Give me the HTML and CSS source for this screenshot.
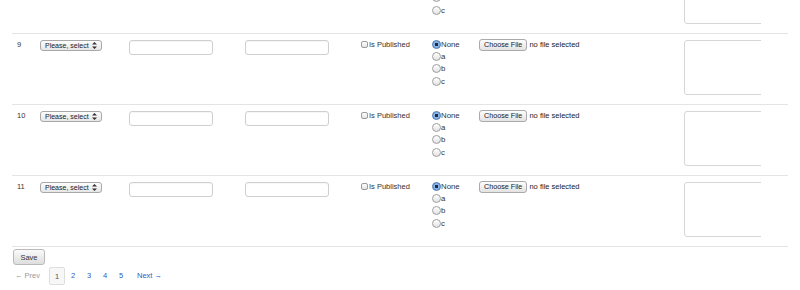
FILE: index.html
```html
<!DOCTYPE html>
<html lang="en">
<head>
    <meta charset="UTF-8">
    <title>Items</title>
    <link rel="stylesheet" href="styles.css">
</head>
<body>
    <form class="grid-form">
        <table class="items">
            <colgroup>
                <col class="c-num"><col class="c-sel"><col class="c-in"><col class="c-in"><col class="c-chk"><col class="c-radio"><col class="c-file"><col class="c-area">
            </colgroup>
            <tbody>
                <tr>
                    <td>8</td>
                    <td><select><option>Please, select</option></select></td>
                    <td><input type="text"></td>
                    <td><input type="text"></td>
                    <td><label class="chk"><input type="checkbox">Is Published</label></td>
                    <td>
                        <label class="opt"><input type="radio" name="r8" checked>None</label>
                        <label class="opt"><input type="radio" name="r8">a</label>
                        <label class="opt"><input type="radio" name="r8">b</label>
                        <label class="opt"><input type="radio" name="r8">c</label>
                    </td>
                    <td><span class="file-btn">Choose File</span> <span class="file-name">no file selected</span></td>
                    <td><div class="area-clip"><textarea></textarea></div></td>
                </tr>
                <tr>
                    <td>9</td>
                    <td><select><option>Please, select</option></select></td>
                    <td><input type="text"></td>
                    <td><input type="text"></td>
                    <td><label class="chk"><input type="checkbox">Is Published</label></td>
                    <td>
                        <label class="opt"><input type="radio" name="r9" checked>None</label>
                        <label class="opt"><input type="radio" name="r9">a</label>
                        <label class="opt"><input type="radio" name="r9">b</label>
                        <label class="opt"><input type="radio" name="r9">c</label>
                    </td>
                    <td><span class="file-btn">Choose File</span> <span class="file-name">no file selected</span></td>
                    <td><div class="area-clip"><textarea></textarea></div></td>
                </tr>
                <tr>
                    <td>10</td>
                    <td><select><option>Please, select</option></select></td>
                    <td><input type="text"></td>
                    <td><input type="text"></td>
                    <td><label class="chk"><input type="checkbox">Is Published</label></td>
                    <td>
                        <label class="opt"><input type="radio" name="r10" checked>None</label>
                        <label class="opt"><input type="radio" name="r10">a</label>
                        <label class="opt"><input type="radio" name="r10">b</label>
                        <label class="opt"><input type="radio" name="r10">c</label>
                    </td>
                    <td><span class="file-btn">Choose File</span> <span class="file-name">no file selected</span></td>
                    <td><div class="area-clip"><textarea></textarea></div></td>
                </tr>
                <tr>
                    <td>11</td>
                    <td><select><option>Please, select</option></select></td>
                    <td><input type="text"></td>
                    <td><input type="text"></td>
                    <td><label class="chk"><input type="checkbox">Is Published</label></td>
                    <td>
                        <label class="opt"><input type="radio" name="r11" checked>None</label>
                        <label class="opt"><input type="radio" name="r11">a</label>
                        <label class="opt"><input type="radio" name="r11">b</label>
                        <label class="opt"><input type="radio" name="r11">c</label>
                    </td>
                    <td><span class="file-btn">Choose File</span> <span class="file-name">no file selected</span></td>
                    <td><div class="area-clip"><textarea></textarea></div></td>
                </tr>
            </tbody>
        </table>

        <button type="button" class="save">Save</button>

        <div class="pager">
            <span class="prev">&larr; Prev</span>
            <span class="page current">1</span>
            <a class="page" href="#">2</a>
            <a class="page" href="#">3</a>
            <a class="page" href="#">4</a>
            <a class="page" href="#">5</a>
            <a class="next" href="#">Next &rarr;</a>
        </div>
    </form>
</body>
</html>
```

FILE: styles.css
```css
body {
    margin: 0;
    font-family: "Liberation Sans", Arial, sans-serif;
    font-size: 7.5px;
    color: #333;
    background: #fff;
}
.grid-form {
    padding: 0 12px;
}
.items {
    width: 776px;
    margin-top: -38px;
    border-collapse: collapse;
    table-layout: fixed;
    border-bottom: 1px solid #e4e4e4;
}
.c-num { width: 23px; }
.c-sel { width: 89px; }
.c-in { width: 116px; }
.c-chk { width: 71px; }
.c-radio { width: 47px; }
.c-file { width: 205px; }
.c-area { width: 109px; }
.items td {
    border-top: 1px solid #e4e4e4;
    padding: 6px 0 9px 5px;
    vertical-align: top;
    height: 55px;
    line-height: 9px;
}
select {
    -webkit-appearance: none;
    appearance: none;
    width: 62px;
    height: 11px;
    margin: 0;
    padding: 0 0 0 4px;
    font-family: "Liberation Sans", Arial, sans-serif;
    font-size: 7px;
    color: #222;
    border: 1px solid #a8a8a8;
    border-radius: 3px;
    background: url("data:image/svg+xml;utf8,<svg xmlns='http://www.w3.org/2000/svg' width='5' height='7'><path d='M2.5 0L5 2.6H0z M2.5 7L5 4.4H0z' fill='%23333'/></svg>") no-repeat right 4px center, linear-gradient(#fdfdfd, #e6e6e6);
}
input[type="text"] {
    width: 84px;
    height: 15px;
    margin: 0;
    padding: 0 3px;
    box-sizing: border-box;
    border: 1px solid #cfcfcf;
    border-radius: 3px;
    box-shadow: inset 0 1px 1px rgba(0, 0, 0, 0.04);
}
.chk {
    display: flex;
    align-items: center;
    gap: 1px;
}
input[type="checkbox"] {
    -webkit-appearance: none;
    appearance: none;
    width: 7px;
    height: 7px;
    margin: 0;
    border: 1px solid #9c9c9c;
    border-radius: 2px;
    background: linear-gradient(#fff, #e4e4e4);
}
.opt {
    display: flex;
    align-items: center;
    height: 12.3px;
    margin-top: -2px;
    font-size: 7.8px;
}
.opt + .opt {
    margin-top: 0;
}
input[type="radio"] {
    -webkit-appearance: none;
    appearance: none;
    width: 9px;
    height: 9px;
    margin: 0;
    border: 1px solid #a0a0a0;
    border-radius: 50%;
    background: linear-gradient(#fff, #e2e2e2);
}
input[type="radio"]:checked {
    border-color: #5a7fb0;
    background: radial-gradient(circle, #1c2a3e 0 1.4px, #8db8ea 1.8px, #5f98dc 100%);
}
.file-btn {
    display: inline-block;
    height: 12px;
    line-height: 10px;
    padding: 0 4px;
    box-sizing: border-box;
    margin-top: -1px;
    border: 1px solid #aaa;
    border-radius: 3px;
    background: linear-gradient(#fdfdfd, #e3e3e3);
    color: #222;
    font-size: 7.2px;
}
.file-name {
    color: #222;
    font-size: 7.5px;
}
.area-clip {
    width: 77px;
    overflow: hidden;
}
textarea {
    display: block;
    width: 90px;
    height: 55px;
    margin: 0;
    box-sizing: border-box;
    border: 1px solid #d6d6d6;
    border-radius: 3px;
    resize: none;
}
.save {
    display: block;
    margin: 2px 0 0 1px;
    width: 32px;
    height: 16px;
    padding: 0;
    font-family: "Liberation Sans", Arial, sans-serif;
    font-size: 7.5px;
    color: #333;
    border: 1px solid #b9b9b9;
    border-radius: 3px;
    background: linear-gradient(#fafafa, #dedede);
}
.pager {
    display: flex;
    align-items: center;
    margin-top: 1px;
    padding-left: 3px;
    height: 19px;
}
.pager a {
    color: #2b5ec0;
    text-decoration: none;
}
.prev {
    color: #999;
    margin-right: 9px;
}
.page {
    width: 16px;
    text-align: center;
}
.current {
    height: 18px;
    line-height: 18px;
    box-sizing: border-box;
    border: 1px solid #dedede;
    border-radius: 2px;
    background: #f7f7f7;
    color: #555;
}
.next {
    margin-left: 8px;
}
```
